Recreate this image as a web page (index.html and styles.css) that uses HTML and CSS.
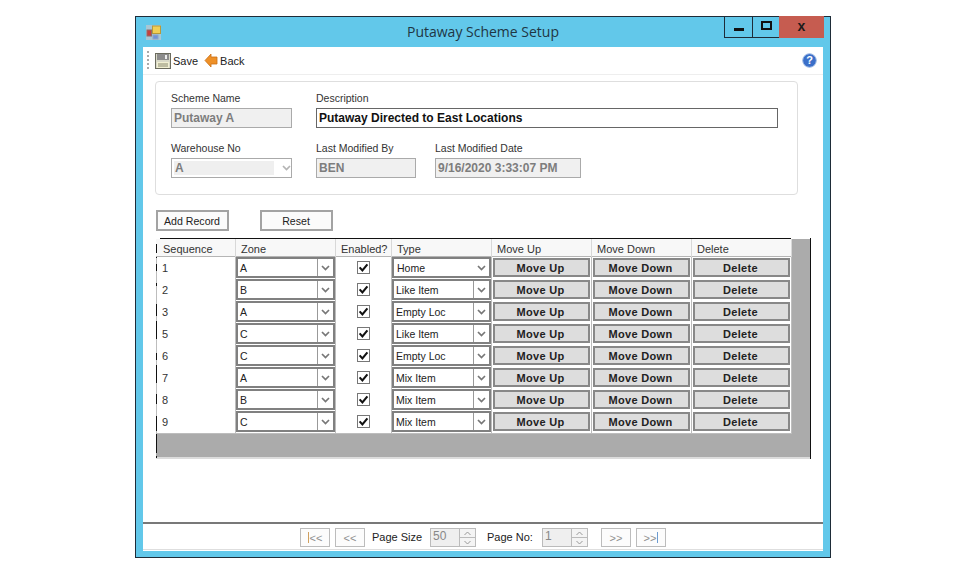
FILE: index.html
```html
<!DOCTYPE html>
<html lang="en">
<head>
<meta charset="utf-8">
<title>Putaway Scheme Setup</title>
<link rel="stylesheet" href="styles.css">
</head>
<body>
<svg class="defs" width="0" height="0" aria-hidden="true">
  <symbol id="chev" viewBox="0 0 9 6"><path d="M1 1l3.500 3.500L8 1" fill="none" stroke="#777" stroke-width="1.700"/></symbol>
  <symbol id="check" viewBox="0 0 13 13"><rect x=".5" y=".5" width="12" height="12" fill="#fff" stroke="#777"/><path d="M2.600 6.400l2.800 3 5-6" fill="none" stroke="#111" stroke-width="2.100"/></symbol>
  <symbol id="up" viewBox="0 0 9 5"><path d="M1.500 4L4.500 1l3 3" fill="none" stroke="#999" stroke-width="1"/></symbol>
  <symbol id="down" viewBox="0 0 9 5"><path d="M1.500 1l3 3 3-3" fill="none" stroke="#999" stroke-width="1"/></symbol>
</svg>
<div class="window">
  <header class="titlebar">
    <svg class="app-icon" width="15" height="15" viewBox="0 0 15 15">
      <rect x="0" y="0" width="15" height="15" fill="#a9c7d4"/>
      <rect x="6.500" y="1" width="8" height="7.500" fill="#f0cf55" stroke="#b79a3a"/>
      <rect x="1" y="5" width="4.500" height="6" fill="#c8403c" stroke="#8c6c6c"/>
      <rect x="7" y="10" width="5" height="4" fill="#6f94d8" stroke="#8fa6c4"/>
    </svg>
    <h1 class="title">Putaway Scheme Setup</h1>
    <div class="winbtns">
      <div class="winbtn winbtn-min"><span class="glyph-min"></span></div>
      <div class="winbtn winbtn-max"><span class="glyph-max"></span></div>
      <div class="winbtn winbtn-close">x</div>
    </div>
  </header>
  <main class="client">
    <div class="toolbar">
      <span class="grip"></span>
      <svg class="tool-icon" width="16" height="16" viewBox="0 0 16 16">
        <rect x=".5" y=".5" width="15" height="15" fill="#d9d9c8" stroke="#6b6b5e"/>
        <rect x="2" y="1" width="12" height="6" fill="#8c8c8c"/>
        <rect x="10" y="2" width="2" height="4" fill="#eee"/>
        <rect x="2" y="9" width="12" height="6" fill="#f1efd2"/>
        <path d="M3 11h10M3 13h10" stroke="#8a8a70"/>
      </svg>
      <span class="tool-label">Save</span>
      <svg class="tool-icon tool-back" width="14" height="15" viewBox="0 0 14 15">
        <path d="M7 1L1 7.500 7 14v-3h6V4H7z" fill="#ee9028" stroke="#c96f14" stroke-width=".8"/>
      </svg>
      <span class="tool-label">Back</span>
      <svg class="help" width="15" height="15" viewBox="0 0 15 15">
        <circle cx="7.500" cy="7.500" r="6.800" fill="#3b6fc9" stroke="#9db9e4"/>
        <text x="7.500" y="11.200" text-anchor="middle" class="help-q">?</text>
      </svg>
    </div>

    <section class="group">
      <div class="field-row">
        <div class="field w-name"><label class="lbl">Scheme Name</label><div class="input disabled">Putaway A</div></div>
        <div class="field w-desc"><label class="lbl">Description</label><div class="input active">Putaway Directed to East Locations</div></div>
      </div>
      <div class="field-row">
        <div class="field w-name"><label class="lbl">Warehouse No</label>
          <div class="input disabled wh"><span class="wh-value">A</span><svg class="wh-chev" width="9" height="6"><use href="#chev"/></svg></div>
        </div>
        <div class="field w-by"><label class="lbl">Last Modified By</label><div class="input disabled">BEN</div></div>
        <div class="field w-date"><label class="lbl">Last Modified Date</label><div class="input disabled">9/16/2020 3:33:07 PM</div></div>
      </div>
    </section>

    <div class="actions">
      <button class="btn">Add Record</button>
      <button class="btn">Reset</button>
    </div>

    <section class="gridview">
      <div class="grow ghead">
        <div class="hc hc-seq">Sequence</div><div class="hc">Zone</div><div class="hc hc-en">Enabled?</div><div class="hc">Type</div><div class="hc">Move Up</div><div class="hc">Move Down</div><div class="hc">Delete</div>
      </div>

      <div class="grow"><div class="c seq">1</div><div class="c"><div class="combo"><span class="ct">A</span><span class="ca"><svg width="9" height="6"><use href="#chev"/></svg></span></div></div><div class="c cen"><svg width="13" height="13"><use href="#check"/></svg></div><div class="c"><div class="combo plain"><span class="ct">Home</span><span class="ca"><svg width="9" height="6"><use href="#chev"/></svg></span></div></div><div class="c"><button class="gbtn">Move Up</button></div><div class="c"><button class="gbtn">Move Down</button></div><div class="c"><button class="gbtn">Delete</button></div></div>

      <div class="grow"><div class="c seq">2</div><div class="c"><div class="combo"><span class="ct">B</span><span class="ca"><svg width="9" height="6"><use href="#chev"/></svg></span></div></div><div class="c cen"><svg width="13" height="13"><use href="#check"/></svg></div><div class="c"><div class="combo"><span class="ct">Like Item</span><span class="ca"><svg width="9" height="6"><use href="#chev"/></svg></span></div></div><div class="c"><button class="gbtn">Move Up</button></div><div class="c"><button class="gbtn">Move Down</button></div><div class="c"><button class="gbtn">Delete</button></div></div>

      <div class="grow"><div class="c seq">3</div><div class="c"><div class="combo"><span class="ct">A</span><span class="ca"><svg width="9" height="6"><use href="#chev"/></svg></span></div></div><div class="c cen"><svg width="13" height="13"><use href="#check"/></svg></div><div class="c"><div class="combo"><span class="ct">Empty Loc</span><span class="ca"><svg width="9" height="6"><use href="#chev"/></svg></span></div></div><div class="c"><button class="gbtn">Move Up</button></div><div class="c"><button class="gbtn">Move Down</button></div><div class="c"><button class="gbtn">Delete</button></div></div>

      <div class="grow"><div class="c seq">5</div><div class="c"><div class="combo"><span class="ct">C</span><span class="ca"><svg width="9" height="6"><use href="#chev"/></svg></span></div></div><div class="c cen"><svg width="13" height="13"><use href="#check"/></svg></div><div class="c"><div class="combo"><span class="ct">Like Item</span><span class="ca"><svg width="9" height="6"><use href="#chev"/></svg></span></div></div><div class="c"><button class="gbtn">Move Up</button></div><div class="c"><button class="gbtn">Move Down</button></div><div class="c"><button class="gbtn">Delete</button></div></div>

      <div class="grow"><div class="c seq">6</div><div class="c"><div class="combo"><span class="ct">C</span><span class="ca"><svg width="9" height="6"><use href="#chev"/></svg></span></div></div><div class="c cen"><svg width="13" height="13"><use href="#check"/></svg></div><div class="c"><div class="combo"><span class="ct">Empty Loc</span><span class="ca"><svg width="9" height="6"><use href="#chev"/></svg></span></div></div><div class="c"><button class="gbtn">Move Up</button></div><div class="c"><button class="gbtn">Move Down</button></div><div class="c"><button class="gbtn">Delete</button></div></div>

      <div class="grow"><div class="c seq">7</div><div class="c"><div class="combo"><span class="ct">A</span><span class="ca"><svg width="9" height="6"><use href="#chev"/></svg></span></div></div><div class="c cen"><svg width="13" height="13"><use href="#check"/></svg></div><div class="c"><div class="combo"><span class="ct">Mix Item</span><span class="ca"><svg width="9" height="6"><use href="#chev"/></svg></span></div></div><div class="c"><button class="gbtn">Move Up</button></div><div class="c"><button class="gbtn">Move Down</button></div><div class="c"><button class="gbtn">Delete</button></div></div>

      <div class="grow"><div class="c seq">8</div><div class="c"><div class="combo"><span class="ct">B</span><span class="ca"><svg width="9" height="6"><use href="#chev"/></svg></span></div></div><div class="c cen"><svg width="13" height="13"><use href="#check"/></svg></div><div class="c"><div class="combo"><span class="ct">Mix Item</span><span class="ca"><svg width="9" height="6"><use href="#chev"/></svg></span></div></div><div class="c"><button class="gbtn">Move Up</button></div><div class="c"><button class="gbtn">Move Down</button></div><div class="c"><button class="gbtn">Delete</button></div></div>

      <div class="grow"><div class="c seq">9</div><div class="c"><div class="combo"><span class="ct">C</span><span class="ca"><svg width="9" height="6"><use href="#chev"/></svg></span></div></div><div class="c cen"><svg width="13" height="13"><use href="#check"/></svg></div><div class="c"><div class="combo"><span class="ct">Mix Item</span><span class="ca"><svg width="9" height="6"><use href="#chev"/></svg></span></div></div><div class="c"><button class="gbtn">Move Up</button></div><div class="c"><button class="gbtn">Move Down</button></div><div class="c"><button class="gbtn">Delete</button></div></div>

      <svg class="grid-ink" width="655" height="221" viewBox="0 0 655 221">
        <path d="M4 .5H635M654.500 0V221" stroke="#111" fill="none"/>
        <path d="M.5 6v9M.5 19v1M.5 26v7M.5 45v3M.5 66v12M.5 83v18M.5 115v7M.5 127v18M.5 156v10M.5 178v15M.5 196v19M.5 218v2" stroke="#111" fill="none"/>
      </svg>
    </section>

    <footer class="pager">
      <button class="pbtn"><span class="bar-l"></span>&lt;&lt;</button>
      <button class="pbtn pbtn-gap">&lt;&lt;</button>
      <span class="plabel l-size">Page Size</span>
      <div class="spin s-size"><span class="spin-v">50</span><span class="spin-b"><i class="spin-a"><svg width="9" height="5"><use href="#up"/></svg></i><i class="spin-a"><svg width="9" height="5"><use href="#down"/></svg></i></span></div>
      <span class="plabel l-no">Page No:</span>
      <div class="spin s-no"><span class="spin-v">1</span><span class="spin-b"><i class="spin-a"><svg width="9" height="5"><use href="#up"/></svg></i><i class="spin-a"><svg width="9" height="5"><use href="#down"/></svg></i></span></div>
      <button class="pbtn p-next">&gt;&gt;</button>
      <button class="pbtn pbtn-gap">&gt;&gt;<span class="bar-r"></span></button>
    </footer>
  </main>
</div>
</body>
</html>
```

FILE: styles.css
```css
* { box-sizing: border-box; }
html, body { margin: 0; padding: 0; background: #fff; }
body { font-family: "Liberation Sans", Arial, sans-serif; font-size: 11px; color: #222; overflow: hidden; }
.defs { position: absolute; }

.window {
  width: 696px; height: 542px; margin: 16px 0 0 135px;
  background: #62c8ea; border: 1px solid #1e2c38;
  padding: 0 7px 6px 7px; display: flex; flex-direction: column;
}
.titlebar { height: 30px; flex: none; display: flex; position: relative; align-items: center; }
.app-icon { margin: 1px 0 0 3px; }
.title {
  position: absolute; left: 0; right: 0; top: 5px; margin: 0; text-align: center;
  font-family: "Open Sans", sans-serif; font-weight: 400; font-size: 14px; line-height: 20px; color: #1f3644;
}
.winbtns { position: absolute; right: -1px; top: -1px; display: flex; height: 22px; }
.winbtn { height: 22px; display: flex; align-items: center; justify-content: center; border: 1px solid #1e2c38; }
.winbtn-min { width: 28px; border-right: 0; }
.winbtn-max { width: 27px; border-right: 0; }
.winbtn-close { width: 45px; background: #c65c50; border-color: #c65c50; font: bold 14px "Liberation Sans", sans-serif; color: #1a1a1a; padding-bottom: 2px; }
.glyph-min { width: 10px; height: 3px; background: #111; margin-top: 4px; }
.glyph-max { width: 11px; height: 9px; border: 2px solid #111; margin-top: -3px; }

.client { flex: 1; background: #fff; display: flex; flex-direction: column; min-height: 0; }

.toolbar { height: 28px; flex: none; border-bottom: 1px solid #eeeeee; display: flex; align-items: center; padding-left: 4px; }
.grip { width: 2px; height: 20px; background: repeating-linear-gradient(#aaa 0 2px, transparent 2px 4px); margin-right: 6px; }
.tool-icon { flex: none; }
.tool-label { font-size: 11px; color: #222; margin-left: 2px; }
.tool-back { margin-left: 6px; }
.help { margin-left: auto; margin-right: 6px; }
.help-q { font: bold 11px "Liberation Sans", sans-serif; fill: #fff; }

.group {
  flex: none; width: 643px; height: 114px; margin: 6px 0 0 12px; padding: 9px 0 0 15px;
  border: 1px solid #dedede; border-radius: 4px;
  display: flex; flex-direction: column; gap: 13px;
}
.field-row { display: flex; gap: 24px; height: 37px; }
.field { display: flex; flex-direction: column; }
.w-name { width: 121px; }
.w-desc { width: 462px; }
.w-by { width: 100px; }
.w-date { width: 146px; margin-left: -5px; }
.lbl { height: 17px; font-size: 10.5px; line-height: 14px; color: #333; white-space: nowrap; }
.input {
  height: 20px; padding-left: 2px; font-weight: bold; font-size: 12px; line-height: 19px; white-space: nowrap;
  border: 1px solid #555; color: #111;
}
.input.active { border-color: #666; }
.input.disabled { background: #f0f0f0; border-color: #aaa; color: #7d7d7d; }
.wh { background: #fff !important; display: flex; align-items: center; padding: 2px 0 2px 2px; }
.wh-value { width: 100px; height: 14px; background: #efefef; padding-left: 1px; line-height: 14px; }
.wh-chev { margin-left: 8px; opacity: .55; }

.actions { flex: none; display: flex; gap: 31px; margin: 15px 0 0 13px; }
.btn {
  width: 73px; height: 21px; padding: 0 1px 0 0; background: #fbfbfb; border: 2px solid #a3a3a3;
  font: 10.6px "Liberation Sans", sans-serif; color: #222;
}

.gridview {
  flex: none; position: relative; width: 655px; height: 221px; margin: 7px 0 0 13px;
  background: #ababab; border-top: 1px solid #fff; border-bottom: 2px solid #dcdcdc;
  display: flex; flex-direction: column;
}
.grid-ink { position: absolute; left: 0; top: -1px; pointer-events: none; }
.grow { display: grid; grid-template-columns: 80px 100px 56px 100px 100px 100px 100px; height: 22px; width: 636px; background: #fff; flex: none; }
.ghead { height: 18px; background: #f8f8f8; border-bottom: 1px solid #b5b5b5; }
.hc { font-size: 11px; line-height: 20px; padding-left: 5px; border-right: 1px solid #d8d8d8; color: #333; white-space: nowrap; }
.hc-seq { padding-left: 7px; }
.c { border-right: 1px solid #bdbdbd; border-bottom: 1px solid #bdbdbd; min-width: 0; }
.seq { padding-left: 5px; font-size: 11px; line-height: 22px; color: #333; border-left: 1px solid #bdbdbd; }
.cen { display: flex; align-items: center; justify-content: center; background: #fff; padding-bottom: 1px; }
.combo { height: 21px; border: 2px solid #808080; display: flex; background: #fff; font-size: 10.5px; line-height: 18px; color: #222; }
.ct { flex: 1; padding-left: 2px; }
.ca { width: 16px; border-left: 1px solid #999; display: flex; align-items: center; justify-content: center; }
.plain .ct { padding-left: 3px; }
.plain .ca { border-left-color: transparent; }
.gbtn {
  display: block; width: 97px; height: 19px; margin: 1px 0 0 1px; padding: 0 2px 0 0;
  background: #dddddd; border: 2px solid #888;
  font: bold 11px "Liberation Sans", sans-serif; letter-spacing: .3px; color: #222;
}

.pager {
  flex: none; margin-top: auto; height: 28px; border-top: 2px solid #787878; border-bottom: 1px solid #dedede;
  margin-bottom: 1px; display: flex; align-items: flex-start; padding: 4px 0 0 157px;
}
.pbtn {
  width: 30px; height: 19px; padding: 0; background: #fcfcfc; border: 1px solid #bcbcbc;
  font: 11px "Liberation Sans", sans-serif; color: #8f8f8f; display: flex; align-items: center; justify-content: center; flex: none;
}
.pbtn-gap { margin-left: 5px; }
.p-next { margin-left: 13px; }
.bar-l, .bar-r { width: 1px; height: 11px; background: #d0a060; }
.bar-l { margin-right: 1px; }
.bar-r { margin-left: 1px; background: #6c9bd0; }
.plabel { font-size: 11px; line-height: 19px; color: #222; white-space: nowrap; }
.l-size { margin-left: 7px; width: 58px; }
.l-no { margin-left: 11px; width: 55px; }
.spin { width: 46px; height: 19px; display: flex; background: #efefef; border: 1px solid #bbb; flex: none; }
.spin-v { flex: 1; padding-left: 2px; color: #888; font-size: 12px; line-height: 15px; }
.spin-b { width: 16px; background: #fff; border-left: 1px solid #bbb; display: flex; flex-direction: column; }
.spin-a { flex: 1; background: #f4f4f4; display: flex; align-items: center; justify-content: center; }
.spin-a + .spin-a { border-top: 1px solid #bbb; }
```
